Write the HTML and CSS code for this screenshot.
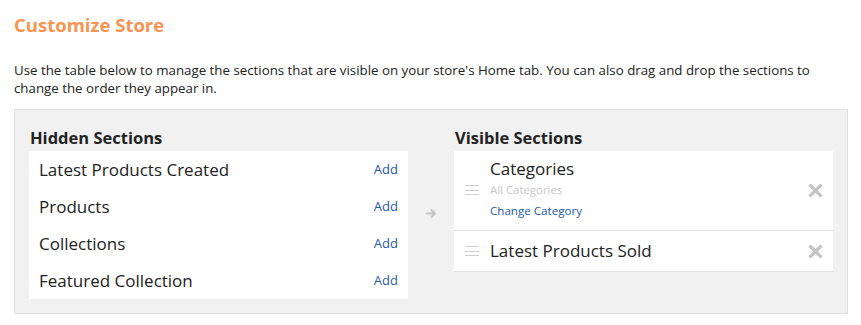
FILE: index.html
```html
<!DOCTYPE html>
<html lang="en">
<head>
    <meta charset="UTF-8">
    <meta name="viewport" content="width=device-width, initial-scale=1.0">
    <title>Customize Store</title>
    <link rel="stylesheet" href="styles.css">
</head>
<body>
    <main class="page">
        <h1 class="page-title">Customize Store</h1>
        <p class="intro">Use the table below to manage the sections that are visible on your store's Home tab. You can also drag and drop the sections to change the order they appear in.</p>

        <section class="sections-box">
            <div class="column">
                <h2 class="column-title">Hidden Sections</h2>
                <ul class="hidden-list">
                    <li class="hidden-item"><span>Latest Products Created</span><a href="#" class="add-link">Add</a></li>
                    <li class="hidden-item"><span>Products</span><a href="#" class="add-link">Add</a></li>
                    <li class="hidden-item"><span>Collections</span><a href="#" class="add-link">Add</a></li>
                    <li class="hidden-item"><span>Featured Collection</span><a href="#" class="add-link">Add</a></li>
                </ul>
            </div>

            <div class="arrow">
                <svg width="12" height="11" viewBox="0 0 12 11"><path d="M1 5.5h9M6 1.5l4 4-4 4" fill="none" stroke="#c4c4c4" stroke-width="2"/></svg>
            </div>

            <div class="column">
                <h2 class="column-title">Visible Sections</h2>
                <ul class="visible-list">
                    <li class="visible-item">
                        <span class="handle"><i></i><i></i><i></i></span>
                        <div class="visible-info">
                            <div class="visible-name">Categories</div>
                            <div class="visible-sub">All Categories</div>
                            <a href="#" class="change-link">Change Category</a>
                        </div>
                        <span class="remove">
                            <svg width="15" height="13" viewBox="0 0 15 13"><path d="M1.5 0.5l12 12M13.5 0.5l-12 12" stroke="#c4c4c4" stroke-width="3.2"/></svg>
                        </span>
                    </li>
                    <li class="visible-item visible-item-short">
                        <span class="handle"><i></i><i></i><i></i></span>
                        <div class="visible-info">
                            <div class="visible-name">Latest Products Sold</div>
                        </div>
                        <span class="remove">
                            <svg width="15" height="13" viewBox="0 0 15 13"><path d="M1.5 0.5l12 12M13.5 0.5l-12 12" stroke="#c4c4c4" stroke-width="3.2"/></svg>
                        </span>
                    </li>
                </ul>
            </div>
        </section>
    </main>
</body>
</html>
```

FILE: styles.css
```css
body {
    margin: 0;
    font-family: "Open Sans", Arial, sans-serif;
    color: #222;
    background: #fff;
}

.page {
    padding: 10px 13px 0 14px;
}

.page-title {
    margin: 0;
    font-size: 18.5px;
    line-height: 30px;
    font-weight: 700;
    color: #f79452;
}

.intro {
    margin: 21px 0 12px;
    font-size: 13.3px;
    line-height: 18px;
    color: #222;
}

.sections-box {
    display: grid;
    grid-template-columns: 379px 46px 379px;
    padding: 18px 14px 14px 14px;
    background: #f1f1f1;
    border: 1px solid #e0e0e0;
}

.column-title {
    margin: 0 0 3px 1px;
    font-size: 16.5px;
    line-height: 20px;
    font-weight: 700;
    color: #222;
}

.hidden-list,
.visible-list {
    list-style: none;
    margin: 0;
    padding: 0;
    background: #fff;
}

.hidden-item {
    display: flex;
    justify-content: space-between;
    align-items: center;
    height: 37px;
    padding: 0 10px;
    font-size: 17px;
}

.add-link {
    font-size: 13px;
    color: #2458ad;
    text-decoration: none;
    margin-top: -2px;
}

.arrow {
    display: flex;
    align-items: center;
    justify-content: center;
}

.visible-list {
    align-self: start;
    margin-top: 1px;
    border-bottom: 1px solid #e3e3e3;
}

.visible-item {
    display: flex;
    align-items: center;
    padding: 6px 10px 7px 11px;
    border-bottom: 1px solid #e3e3e3;
}

.visible-item:last-child {
    border-bottom: none;
}

.visible-item-short {
    height: 40px;
    padding-top: 0;
    padding-bottom: 0;
}

.handle {
    display: flex;
    flex-direction: column;
    gap: 3.5px;
    width: 14px;
    margin-right: 11px;
}

.handle i {
    display: block;
    height: 1px;
    background: #cfcfcf;
}

.visible-info {
    flex: 1;
}

.visible-name {
    font-size: 17px;
    line-height: 24px;
}

.visible-sub {
    font-size: 11.4px;
    line-height: 18px;
    color: #c8c8c8;
}

.change-link {
    display: block;
    font-size: 11.6px;
    line-height: 24px;
    color: #2458ad;
    text-decoration: none;
}

.remove {
    display: flex;
}
```
